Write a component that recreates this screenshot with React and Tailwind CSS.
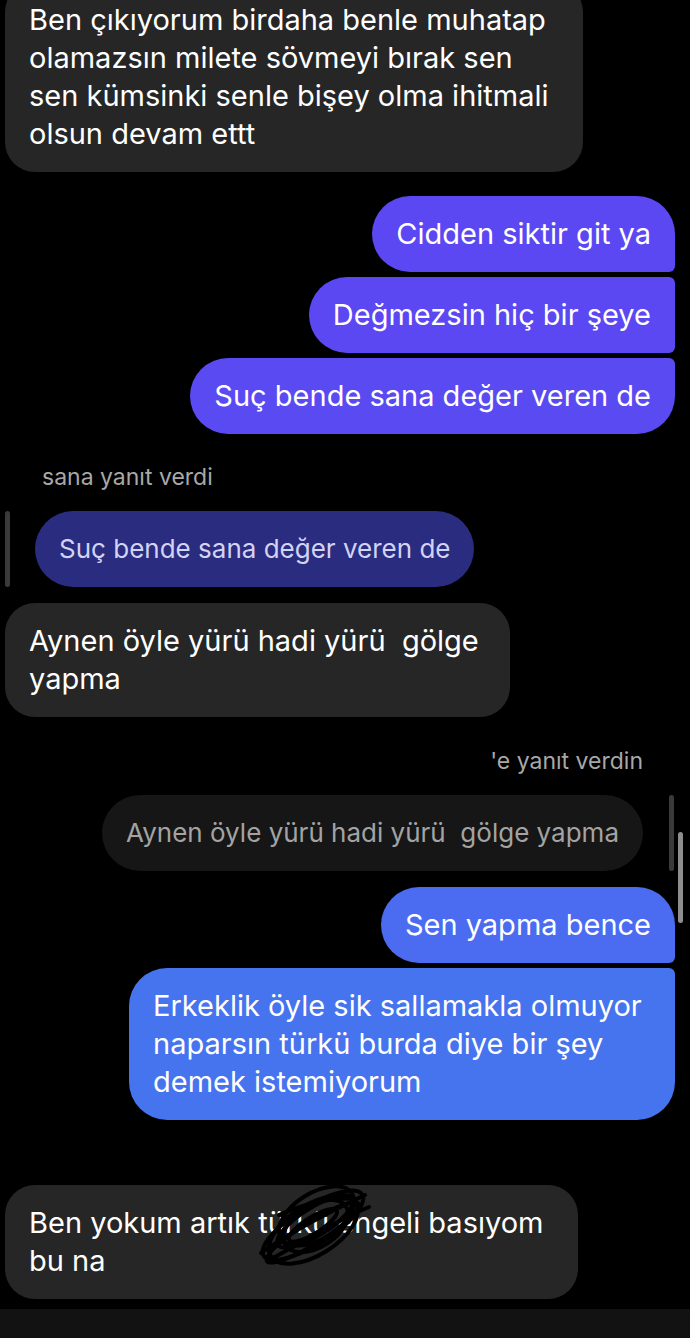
import React from 'react'

const font = { fontFamily: 'Inter, "Noto Sans", sans-serif' }

const Scribble = () => (
  <svg className="absolute left-[244px] top-[-2px]" width="130" height="86" viewBox="0 0 130 86" fill="none" stroke="#000" strokeWidth="4" strokeLinecap="round">
    <g transform="rotate(-32 65 44)">
      <ellipse cx="65" cy="42" rx="58" ry="19" />
      <ellipse cx="63" cy="46" rx="50" ry="25" />
      <ellipse cx="69" cy="40" rx="44" ry="14" />
      <ellipse cx="61" cy="48" rx="54" ry="11" />
      <ellipse cx="67" cy="44" rx="36" ry="21" />
      <ellipse cx="65" cy="42" rx="28" ry="8" />
      <ellipse cx="73" cy="36" rx="42" ry="23" />
    </g>
    <path d="M12 70 C40 50 74 32 116 12 M22 76 C52 60 86 38 120 24 M30 32 C56 20 86 14 108 16" />
  </svg>
)

const msg = 'text-[29px] leading-[38px] py-[19px]'

export default function App() {
  return (
    <div className="w-[690px] h-[1338px] bg-black overflow-hidden flex flex-col text-white" style={font}>
      {/* incoming */}
      <div className={`mt-[-18px] ml-[5px] w-[578px] bg-[#262626] rounded-[30px] pl-6 pr-4 ${msg}`}>
        Ben çıkıyorum birdaha benle muhatap<br />
        olamazsın milete sövmeyi bırak sen<br />
        sen kümsinki senle bişey olma ihitmali<br />
        olsun devam ettt
      </div>

      {/* outgoing purple group */}
      <div className="mt-6 flex flex-col items-end gap-[5px] pr-[15px]">
        <div className={`bg-[#5b48f2] rounded-l-[38px] rounded-tr-[38px] rounded-br-[6px] px-6 ${msg}`}>
          Cidden siktir git ya
        </div>
        <div className={`bg-[#5b48f2] rounded-l-[38px] rounded-r-[6px] px-6 ${msg}`}>
          Değmezsin hiç bir şeye
        </div>
        <div className={`bg-[#5a4af2] rounded-l-[38px] rounded-tr-[6px] rounded-br-[38px] px-6 ${msg}`}>
          Suç bende sana değer veren de
        </div>
      </div>

      {/* reply from them */}
      <div className="mt-[30px] pl-[42px] text-[23px] leading-[26px] text-[#a8a8a8]">sana yanıt verdi</div>
      <div className="mt-[21px] flex items-stretch gap-[25px] pl-[5px]">
        <div className="w-[5px] rounded-full bg-[#3a3a3a]" />
        <div className="bg-[#2a2c80] text-[#d2d3f5] rounded-full px-6 py-[19px] text-[26px] leading-[38px]">
          Suç bende sana değer veren de
        </div>
      </div>
      <div className={`mt-4 ml-[5px] w-[505px] bg-[#262626] rounded-[30px] pl-6 pr-4 ${msg}`}>
        Aynen öyle yürü hadi yürü&nbsp; gölge<br />
        yapma
      </div>

      {/* my reply */}
      <div className="mt-[31px] pr-[47px] text-right text-[23px] leading-[26px] text-[#a8a8a8]">'e yanıt verdin</div>
      <div className="mt-[21px] flex items-stretch justify-end gap-[26px] pr-4 relative">
        <div className="bg-[#161616] text-[#a3a3a3] rounded-full px-6 py-[19px] text-[26px] leading-[38px]">
          Aynen öyle yürü hadi yürü&nbsp; gölge yapma
        </div>
        <div className="w-[5px] rounded-full bg-[#3a3a3a]" />
        <div className="absolute right-[7px] top-[37px] w-[5px] h-[91px] rounded-full bg-[#8e8e8e]" />
      </div>
      <div className="mt-4 flex flex-col items-end gap-[5px] pr-[15px]">
        <div className={`bg-[#4b6bf0] rounded-l-[38px] rounded-tr-[38px] rounded-br-[6px] px-6 ${msg}`}>
          Sen yapma bence
        </div>
        <div className={`w-[546px] bg-[#4673ee] rounded-l-[38px] rounded-tr-[6px] rounded-br-[38px] px-6 ${msg}`}>
          Erkeklik öyle sik sallamakla olmuyor<br />
          naparsın türkü burda diye bir şey<br />
          demek istemiyorum
        </div>
      </div>

      {/* last incoming */}
      <div className={`mt-[65px] ml-[5px] w-[573px] relative bg-[#262626] rounded-[30px] pl-6 pr-4 ${msg}`}>
        Ben yokum artık türkü engeli basıyom<br />
        bu na
        <Scribble />
      </div>

      <div className="mt-auto h-[29px] bg-[#121212]" />
    </div>
  )
}
